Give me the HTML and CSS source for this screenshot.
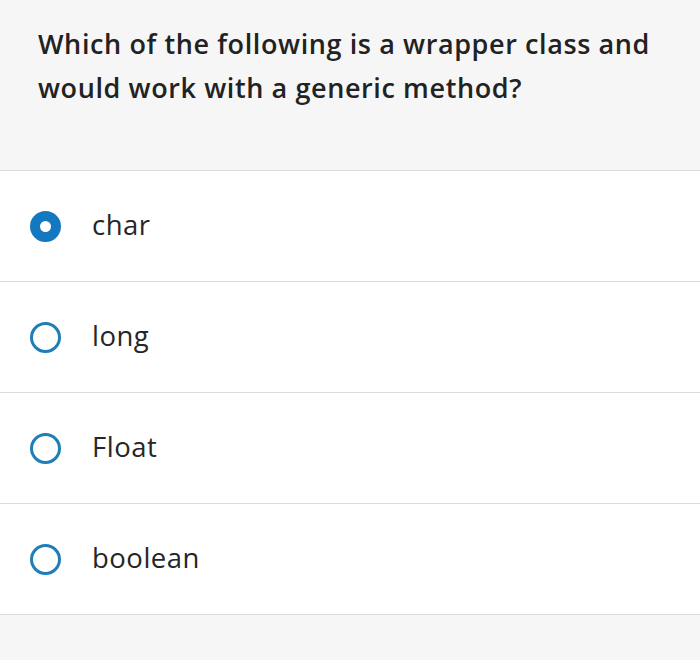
FILE: index.html
```html
<!DOCTYPE html>
<html>
<head>
<meta charset="utf-8">
<link rel="stylesheet" href="styles.css">
</head>
<body>
<div class="page">
  <div class="question">Which of the following is a wrapper class and would work with a generic method?</div>
  <ul class="options">
    <li class="option selected"><span class="radio"></span><span class="label">char</span></li>
    <li class="option"><span class="radio"></span><span class="label">long</span></li>
    <li class="option"><span class="radio"></span><span class="label">Float</span></li>
    <li class="option"><span class="radio"></span><span class="label">boolean</span></li>
  </ul>
</div>
</body>
</html>
```
FILE: styles.css
```css
html, body {
  margin: 0;
  padding: 0;
  background: #f6f6f6;
}
.page {
  width: 700px;
  height: 660px;
  background: #f6f6f6;
  font-family: "Open Sans", Lato, sans-serif;
  color: #222;
}
.question {
  padding: 22px 30px 60px 38px;
  font-size: 27px;
  line-height: 44px;
  font-weight: 600;
  letter-spacing: 0.6px;
  color: #222;
}
.options {
  list-style: none;
  margin: 0;
  padding: 0;
  background: #fff;
  border-top: 1px solid #dcdcdc;
}
.option {
  display: flex;
  align-items: center;
  height: 110px;
  border-bottom: 1px solid #dcdcdc;
  padding-left: 30px;
}
.radio {
  box-sizing: border-box;
  width: 31px;
  height: 31px;
  border-radius: 50%;
  border: 3px solid #1f7db7;
  flex: none;
}
.selected .radio {
  border: 10px solid #1478c0;
  background: #fff;
}
.label {
  margin-left: 31px;
  font-size: 27.5px;
  letter-spacing: 0.5px;
  color: #262626;
  position: relative;
  top: -2px;
}
```
